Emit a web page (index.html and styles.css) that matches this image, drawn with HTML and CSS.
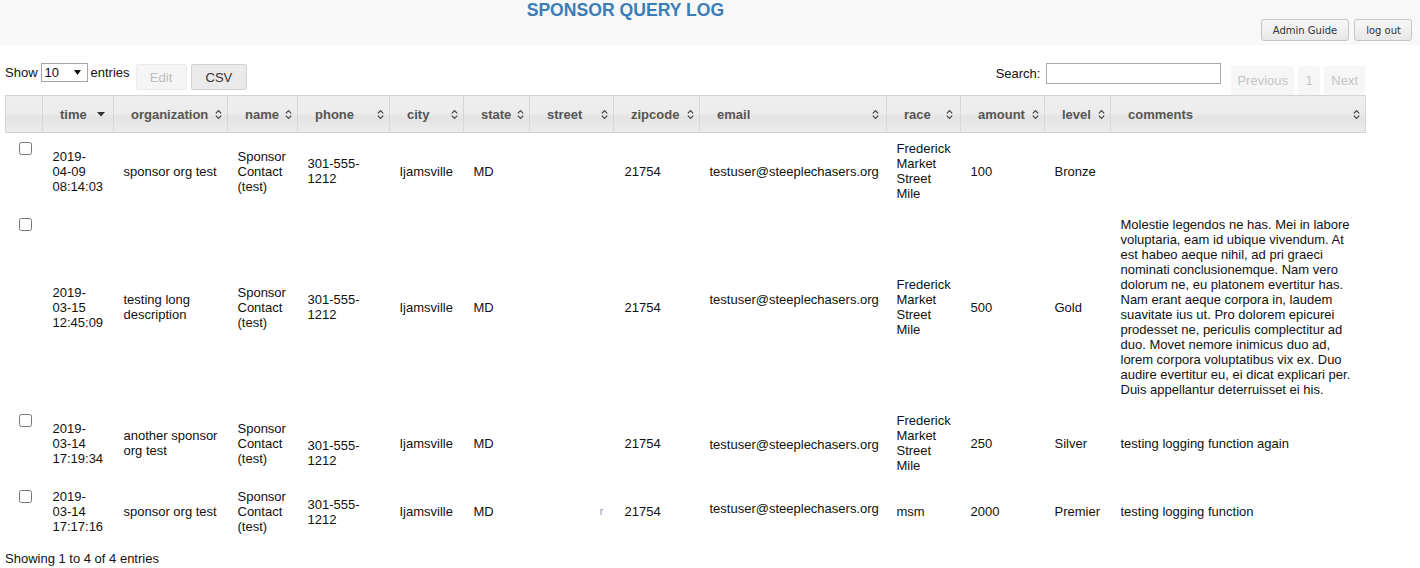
FILE: index.html
```html
<!DOCTYPE html>
<html lang="en">
<head>
<meta charset="utf-8">
<title>Sponsor Query Log</title>
<link rel="stylesheet" href="styles.css">
</head>
<body>
<header class="topbar">
  <h1 class="title">SPONSOR QUERY LOG</h1>
  <nav class="top-actions">
    <button class="top-btn" type="button">Admin Guide</button>
    <button class="top-btn" type="button">log out</button>
  </nav>
</header>

<main class="content">
  <div class="toolbar">
    <div class="tool-left">
      <label class="length">Show
        <span class="select-box"><select class="select"><option>10</option><option>25</option><option>50</option></select><svg class="select-arrow" width="7" height="5" viewBox="0 0 7 5"><path d="M0 0 H7 L3.5 5 Z" fill="#111"/></svg></span>
        entries</label>
      <button class="btn btn-disabled" type="button">Edit</button>
      <button class="btn" type="button">CSV</button>
    </div>
    <div class="tool-right">
      <label class="search">Search: <input class="search-input" type="text"></label>
      <div class="pager">
        <span class="page-btn page-prev">Previous</span>
        <span class="page-btn page-num">1</span>
        <span class="page-btn">Next</span>
      </div>
    </div>
  </div>

  <table class="grid">
    <colgroup>
      <col class="w-check"><col class="w-time"><col class="w-org"><col class="w-name"><col class="w-phone"><col class="w-city"><col class="w-state"><col class="w-street"><col class="w-zip"><col class="w-email"><col class="w-race"><col class="w-amount"><col class="w-level"><col class="w-comments">
    </colgroup>
    <thead>
      <tr>
        <th class="th-check"></th>
        <th>time<svg class="sort" width="8" height="5" viewBox="0 0 8 5"><path d="M0 0 H8 L4 4.5 Z" fill="#333"/></svg></th>
        <th>organization<svg class="sort" width="7" height="11" viewBox="0 0 7 11"><path d="M0.8 4.4 L3.5 1.6 L6.2 4.4 M0.8 6.6 L3.5 9.4 L6.2 6.6" fill="none" stroke="#444" stroke-width="1.2"/></svg></th>
        <th>name<svg class="sort" width="7" height="11" viewBox="0 0 7 11"><path d="M0.8 4.4 L3.5 1.6 L6.2 4.4 M0.8 6.6 L3.5 9.4 L6.2 6.6" fill="none" stroke="#444" stroke-width="1.2"/></svg></th>
        <th>phone<svg class="sort" width="7" height="11" viewBox="0 0 7 11"><path d="M0.8 4.4 L3.5 1.6 L6.2 4.4 M0.8 6.6 L3.5 9.4 L6.2 6.6" fill="none" stroke="#444" stroke-width="1.2"/></svg></th>
        <th>city<svg class="sort" width="7" height="11" viewBox="0 0 7 11"><path d="M0.8 4.4 L3.5 1.6 L6.2 4.4 M0.8 6.6 L3.5 9.4 L6.2 6.6" fill="none" stroke="#444" stroke-width="1.2"/></svg></th>
        <th>state<svg class="sort" width="7" height="11" viewBox="0 0 7 11"><path d="M0.8 4.4 L3.5 1.6 L6.2 4.4 M0.8 6.6 L3.5 9.4 L6.2 6.6" fill="none" stroke="#444" stroke-width="1.2"/></svg></th>
        <th>street<svg class="sort" width="7" height="11" viewBox="0 0 7 11"><path d="M0.8 4.4 L3.5 1.6 L6.2 4.4 M0.8 6.6 L3.5 9.4 L6.2 6.6" fill="none" stroke="#444" stroke-width="1.2"/></svg></th>
        <th>zipcode<svg class="sort" width="7" height="11" viewBox="0 0 7 11"><path d="M0.8 4.4 L3.5 1.6 L6.2 4.4 M0.8 6.6 L3.5 9.4 L6.2 6.6" fill="none" stroke="#444" stroke-width="1.2"/></svg></th>
        <th>email<svg class="sort sort-wide" width="7" height="11" viewBox="0 0 7 11"><path d="M0.8 4.4 L3.5 1.6 L6.2 4.4 M0.8 6.6 L3.5 9.4 L6.2 6.6" fill="none" stroke="#444" stroke-width="1.2"/></svg></th>
        <th>race<svg class="sort sort-wide" width="7" height="11" viewBox="0 0 7 11"><path d="M0.8 4.4 L3.5 1.6 L6.2 4.4 M0.8 6.6 L3.5 9.4 L6.2 6.6" fill="none" stroke="#444" stroke-width="1.2"/></svg></th>
        <th>amount<svg class="sort" width="7" height="11" viewBox="0 0 7 11"><path d="M0.8 4.4 L3.5 1.6 L6.2 4.4 M0.8 6.6 L3.5 9.4 L6.2 6.6" fill="none" stroke="#444" stroke-width="1.2"/></svg></th>
        <th>level<svg class="sort" width="7" height="11" viewBox="0 0 7 11"><path d="M0.8 4.4 L3.5 1.6 L6.2 4.4 M0.8 6.6 L3.5 9.4 L6.2 6.6" fill="none" stroke="#444" stroke-width="1.2"/></svg></th>
        <th>comments<svg class="sort" width="7" height="11" viewBox="0 0 7 11"><path d="M0.8 4.4 L3.5 1.6 L6.2 4.4 M0.8 6.6 L3.5 9.4 L6.2 6.6" fill="none" stroke="#444" stroke-width="1.2"/></svg></th>
      </tr>
    </thead>
    <tbody>
      <tr>
        <td class="td-check"><input type="checkbox" class="cb"></td>
        <td>2019-04-09 08:14:03</td>
        <td>sponsor org test</td>
        <td>Sponsor Contact (test)</td>
        <td>301-555-1212</td>
        <td>Ijamsville</td>
        <td>MD</td>
        <td></td>
        <td class="zip">21754</td>
        <td>testuser@steeplechasers.org</td>
        <td>Frederick Market Street Mile</td>
        <td>100</td>
        <td>Bronze</td>
        <td></td>
      </tr>
      <tr>
        <td class="td-check"><input type="checkbox" class="cb"></td>
        <td>2019-03-15 12:45:09</td>
        <td>testing long description</td>
        <td>Sponsor Contact (test)</td>
        <td>301-555-1212</td>
        <td>Ijamsville</td>
        <td>MD</td>
        <td></td>
        <td class="zip">21754</td>
        <td class="raise-8">testuser@steeplechasers.org</td>
        <td>Frederick Market Street Mile</td>
        <td>500</td>
        <td>Gold</td>
        <td>Molestie legendos ne has. Mei in labore voluptaria, eam id ubique vivendum. At est habeo aeque nihil, ad pri graeci nominati conclusionemque. Nam vero dolorum ne, eu platonem evertitur has. Nam erant aeque corpora in, laudem suavitate ius ut. Pro dolorem epicurei prodesset ne, periculis complectitur ad duo. Movet nemore inimicus duo ad, lorem corpora voluptatibus vix ex. Duo audire evertitur eu, ei dicat explicari per. Duis appellantur deterruisset ei his.</td>
      </tr>
      <tr>
        <td class="td-check"><input type="checkbox" class="cb"></td>
        <td>2019-03-14 17:19:34</td>
        <td>another sponsor org test</td>
        <td>Sponsor Contact (test)</td>
        <td class="lower-10">301-555-1212</td>
        <td>Ijamsville</td>
        <td>MD</td>
        <td></td>
        <td class="zip">21754</td>
        <td class="lower-2">testuser@steeplechasers.org</td>
        <td>Frederick Market Street Mile</td>
        <td>250</td>
        <td>Silver</td>
        <td>testing logging function again</td>
      </tr>
      <tr>
        <td class="td-check"><input type="checkbox" class="cb"></td>
        <td>2019-03-14 17:17:16</td>
        <td>sponsor org test</td>
        <td>Sponsor Contact (test)</td>
        <td>301-555-1212</td>
        <td>Ijamsville</td>
        <td>MD</td>
        <td class="street-mark">r</td>
        <td class="zip">21754</td>
        <td class="raise-3">testuser@steeplechasers.org</td>
        <td>msm</td>
        <td>2000</td>
        <td>Premier</td>
        <td>testing logging function</td>
      </tr>
    </tbody>
  </table>

  <p class="info">Showing 1 to 4 of 4 entries</p>
</main>
</body>
</html>
```

FILE: styles.css
```css
* { box-sizing: border-box; }

html, body {
  margin: 0;
  padding: 0;
  background: #ffffff;
}

body {
  font-family: "Liberation Sans", Arial, sans-serif;
  font-size: 13px;
  line-height: 15px;
  color: #111;
}

/* ---------- top bar ---------- */
.topbar {
  height: 45px;
  background: #f8f8f8;
  display: flex;
  align-items: stretch;
}

.title {
  flex: 1;
  margin: 0;
  padding: 0 10px 0 0;
  text-align: center;
  font-family: "Liberation Sans", Arial, sans-serif;
  font-weight: bold;
  font-size: 17.6px;
  line-height: 21px;
  color: #3b7db4;
}

.top-actions {
  display: flex;
  gap: 5px;
  align-items: flex-end;
  padding: 0 8px 4px 0;
}

.top-btn {
  height: 22px;
  padding: 0 11px;
  font-family: "DejaVu Sans", Verdana, sans-serif;
  font-size: 10px;
  color: #333;
  background: linear-gradient(#f7f7f7, #e8e8e8);
  border: 1px solid #c6c6c6;
  border-radius: 3px;
}

.top-btn + .top-btn {
  padding: 0 10px 0 11px;
}

/* ---------- content ---------- */
.content {
  padding: 18px 5px 0 5px;
  width: 1370px;
}

.toolbar {
  display: flex;
  justify-content: space-between;
  align-items: flex-start;
  height: 33px;
}

.tool-left {
  display: flex;
  align-items: flex-start;
}

.length {
  display: flex;
  align-items: center;
  gap: 3px;
  height: 19px;
}

.select-box {
  display: inline-flex;
  align-items: center;
  width: 47px;
  height: 19px;
  border: 1px solid #a6a6a6;
  background: #fff;
}

.select {
  appearance: none;
  -webkit-appearance: none;
  border: none;
  background: transparent;
  font-family: "Liberation Sans", Arial, sans-serif;
  font-size: 13px;
  width: 32px;
  height: 17px;
  padding: 0 0 0 3px;
  margin: 0;
  color: #111;
}

.btn {
  height: 26px;
  margin-top: 1px;
  padding: 0 14px;
  font-family: "Liberation Sans", Arial, sans-serif;
  font-size: 13px;
  color: #333;
  background: #eaeaea;
  border: 1px solid #d2d2d2;
  border-radius: 2px;
  margin-left: 4px;
}

.btn-disabled {
  margin-left: 6px;
  width: 51px;
  padding: 0;
  color: #bdbdbd;
  background: #f5f5f5;
  border-color: #ececec;
}

.tool-right {
  display: flex;
  align-items: flex-start;
  gap: 10px;
}

.search {
  display: flex;
  align-items: center;
  gap: 6px;
  height: 21px;
}

.search-input {
  width: 175px;
  height: 21px;
  border: 1px solid #a9a9a9;
  padding: 0 3px;
  margin: 0;
}

.pager {
  display: flex;
  gap: 4px;
  margin-top: 3px;
}

.page-btn {
  height: 29px;
  line-height: 29px;
  padding: 0 7px;
  color: #c4c4c4;
  background: #f6f6f6;
  border-radius: 3px;
}

.page-prev { padding: 0 6px; }
.page-num { padding: 0 7.5px; }

/* ---------- table ---------- */
.grid {
  width: 1360px;
  table-layout: fixed;
  border-collapse: collapse;
  margin-top: -1px;
}

.w-check { width: 37px; }
.w-time { width: 71px; }
.w-org { width: 114px; }
.w-name { width: 70px; }
.w-phone { width: 92px; }
.w-city { width: 74px; }
.w-state { width: 66px; }
.w-street { width: 84px; }
.w-zip { width: 86px; }
.w-email { width: 187px; }
.w-race { width: 74px; }
.w-amount { width: 84px; }
.w-level { width: 66px; }
.w-comments { width: 255px; }

.grid thead th {
  position: relative;
  height: 37px;
  padding: 10px 18px 10px 17px;
  text-align: left;
  font-weight: bold;
  color: #555;
  white-space: nowrap;
  background: linear-gradient(#efefef 0%, #ececec 45%, #e4e4e4 58%, #ebebeb 100%);
  border-top: 1px solid #d3d3d3;
  border-bottom: 1px solid #d3d3d3;
  border-left: 1px solid #d6d6d6;
}

.grid thead th:last-child {
  border-right: 1px solid #d6d6d6;
}

.sort {
  position: absolute;
  right: 5px;
  top: 13px;
}

.grid thead th:nth-child(2) .sort {
  top: 16px;
  right: 8px;
}

.sort-wide {
  right: 7px;
}

.grid tbody td {
  padding: 8px 10px;
  vertical-align: middle;
}

.grid tbody td.td-check {
  vertical-align: top;
  padding: 8px 0 0 10px;
}

.cb {
  width: 13px;
  height: 13px;
  margin: 1px 0 0 3px;
  display: block;
}

.grid tbody td.zip { padding-left: 11px; }

.grid tbody td.raise-8 { padding-bottom: 24px; }
.grid tbody td.raise-3 { padding-bottom: 14px; }
.grid tbody td.lower-10 { padding-top: 27px; }
.grid tbody td.lower-2 { padding-top: 11px; }

.grid tbody td.street-mark {
  text-align: right;
  color: #8aa0b4;
  font-size: 11px;
}

.info {
  margin: 9px 0 0 0;
  line-height: 15px;
}
```
